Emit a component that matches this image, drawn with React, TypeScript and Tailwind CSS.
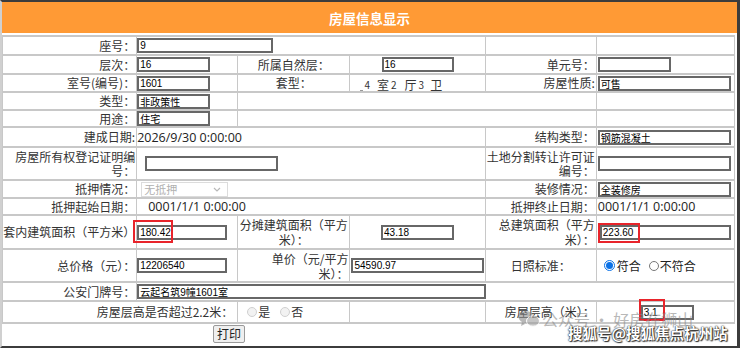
import React from 'react';

const cjk = "font-['Noto_Sans_CJK_SC',sans-serif]";
const td = 'border-x border-y-2 border-[#c8c8c8] p-0 align-middle text-[12px] leading-[14px]';
const lbl = `${td} text-right pr-[1px] text-[#333] whitespace-nowrap`;
const mid = `${td} text-center text-[#333] whitespace-nowrap`;
const date = "block font-['Open_Sans','Noto_Sans_CJK_SC',sans-serif] text-[12.5px] leading-[15px] text-[#222] whitespace-nowrap";

/* 只读输入框 */
const Box: React.FC<{ value?: string; className?: string }> = ({ value = '', className = '' }) => (
  <input
    readOnly
    value={value}
    className={`block h-[15px] border-2 border-[#676767] bg-white px-[1px] py-0 text-[10px] leading-[11px] text-black outline-none font-['Liberation_Sans','Noto_Sans_CJK_SC',sans-serif] ${className}`}
  />
);

const Radio: React.FC<{ checked?: boolean; disabled?: boolean }> = ({ checked, disabled }) =>
  checked ? (
    <span className="inline-flex h-[11px] w-[11px] items-center justify-center rounded-full border border-[#0b72e7] bg-white">
      <span className="h-[7px] w-[7px] rounded-full bg-[#0b72e7]" />
    </span>
  ) : (
    <span
      className={`inline-block h-[10px] w-[10px] rounded-full border ${disabled ? 'border-[#d0d0d0] bg-[#f2f2f2]' : 'border-[#777] bg-white'}`}
    />
  );

const Red: React.FC<{ className: string }> = ({ className }) => (
  <span className={`pointer-events-none absolute border-2 border-[#e8242b] ${className}`} />
);

export default function App() {
  return (
    <div className={`relative h-[348px] w-[740px] overflow-hidden border-t-2 border-b-2 border-l-2 border-r-[3px] border-t-[#3c3c3c] border-b-[#3c3c3c] border-r-[#3c3c3c] border-l-[#d0d0d0] bg-white text-[12px] leading-[14px] ${cjk}`}>
      {/* 标题栏 */}
      <div className="flex h-[31px] items-center justify-center bg-[#ff9a35] text-[13.5px] font-bold text-white">
        房屋信息显示
      </div>

      <table className="mt-[2px] w-[733px] table-fixed border-collapse border border-[#c8c8c8]">
        <colgroup>
          <col className="w-[134px]" />
          <col className="w-[101px]" />
          <col className="w-[112px]" />
          <col className="w-[135px]" />
          <col className="w-[111px]" />
          <col className="w-[138px]" />
        </colgroup>
        <tbody>
          <tr className="h-[19px]">
            <td className={lbl}>座号：</td>
            <td className={td} colSpan={3}><Box value="9" className="w-[136px]" /></td>
            <td className={td} />
            <td className={td} />
          </tr>
          <tr className="h-[19px]">
            <td className={lbl}>层次：</td>
            <td className={td}><Box value="16" className="w-[73px]" /></td>
            <td className={mid}>所属自然层：</td>
            <td className={td}><Box value="16" className="mx-auto w-[72px]" /></td>
            <td className={lbl}>单元号：</td>
            <td className={td}><Box className="ml-[1px] w-[73px]" /></td>
          </tr>
          <tr className="h-[18px]">
            <td className={lbl}>室号(编号)：</td>
            <td className={td}><Box value="1601" className="w-[73px]" /></td>
            <td className={mid}>套型：</td>
            <td className={`${td} align-bottom pl-[10px] text-[#333]`}>
              <span className="inline-flex items-end whitespace-nowrap leading-[13px] translate-y-[2px]">
                <span className="mr-[1px] inline-block w-[3px] border-b border-[#999]" />
                <span className="mr-[7px] text-[10px]">4</span>
                <span className="mr-[2px]">室</span>
                <span className="mr-[8px] text-[10px]">2</span>
                <span className="mr-[2px]">厅</span>
                <span className="mr-[6px] text-[10px]">3</span>
                <span>卫</span>
              </span>
            </td>
            <td className={lbl}>房屋性质:</td>
            <td className={td}><Box value="可售" className="ml-[1px] w-[133px]" /></td>
          </tr>
          <tr className="h-[18px]">
            <td className={lbl}>类型：</td>
            <td className={td}><Box value="非政策性" className="w-[73px]" /></td>
            <td className={td} colSpan={3} />
            <td className={td} />
          </tr>
          <tr className="h-[17px]">
            <td className={lbl}>用途：</td>
            <td className={td}><Box value="住宅" className="w-[73px]" /></td>
            <td className={td} colSpan={3} />
            <td className={td} />
          </tr>
          <tr className="h-[20px]">
            <td className={lbl}>建成日期:</td>
            <td className={td} colSpan={3}><span className={date}>2026/9/30 0:00:00</span></td>
            <td className={lbl}>结构类型：</td>
            <td className={td}><Box value="钢筋混凝土" className="ml-[1px] w-[133px]" /></td>
          </tr>
          <tr className="h-[33px]">
            <td className={lbl}>房屋所有权登记证明编<br />号：</td>
            <td className={td} colSpan={3}><Box className="ml-[8px] w-[133px]" /></td>
            <td className={lbl}>土地分割转让许可证<br />编号：</td>
            <td className={td}><Box className="ml-[1px] w-[133px]" /></td>
          </tr>
          <tr className="h-[18px]">
            <td className={lbl}>抵押情况：</td>
            <td className={td} colSpan={3}>
              <div className="ml-[4px] flex h-[15px] w-[87px] items-center justify-between border border-[#dcdcdc] bg-white px-[2px] text-[11px] leading-[13px] text-[#b0b0b0]">
                <span>无抵押</span>
                <svg width="8" height="5" viewBox="0 0 8 5" className="mr-[4px]">
                  <path d="M1 1l3 3 3-3" fill="none" stroke="#b8b8b8" strokeWidth="1.2" />
                </svg>
              </div>
            </td>
            <td className={lbl}>装修情况：</td>
            <td className={td}><Box value="全装修房" className="ml-[1px] w-[133px]" /></td>
          </tr>
          <tr className="h-[17px]">
            <td className={lbl}>抵押起始日期：</td>
            <td className={`${td} pl-[11px]`} colSpan={3}><span className={date}>0001/1/1 0:00:00</span></td>
            <td className={lbl}>抵押终止日期：</td>
            <td className={`${td} pl-[1px]`}><span className={date}>0001/1/1 0:00:00</span></td>
          </tr>
          <tr className="h-[34px]">
            <td className={`${lbl} overflow-visible`}>
              <div className="flex justify-end">套内建筑面积（平方米）</div>
            </td>
            <td className={td}>
              <span className="relative block w-[90px]">
                <Box value="180.42" className="w-[90px]" />
                <Red className="-left-[4px] -top-[5px] h-[23px] w-[40px]" />
              </span>
            </td>
            <td className={`${mid} leading-[15px]`}>分摊建筑面积（平方<br />米）：</td>
            <td className={td}><Box value="43.18" className="mx-auto w-[73px]" /></td>
            <td className={`${lbl} leading-[15px]`}>总建筑面积（平方<br />米）：</td>
            <td className={td}>
              <span className="relative ml-[3px] block w-[131px]">
                <Box value="223.60" className="w-[131px]" />
                <Red className="-left-[2px] -top-[2px] h-[20px] w-[42px]" />
              </span>
            </td>
          </tr>
          <tr className="h-[33px]">
            <td className={lbl}>总价格（元）：</td>
            <td className={td}><Box value="12206540" className="w-[90px]" /></td>
            <td className={`${lbl} leading-[15px]`}>单价（元/平方<br />米）：</td>
            <td className={td}><Box value="54590.97" className="ml-[1px] w-[133px]" /></td>
            <td className={mid}>日照标准：</td>
            <td className={`${td} pl-[7px]`}>
              <div className="flex items-center text-[#222]">
                <Radio checked />
                <span className="ml-[2px] mr-[8px]">符合</span>
                <Radio />
                <span className="ml-[1px]">不符合</span>
              </div>
            </td>
          </tr>
          <tr className="h-[19px]">
            <td className={lbl}>公安门牌号：</td>
            <td className={td} colSpan={5}><Box value="云起名筑9幢1601室" className="w-[349px]" /></td>
          </tr>
          <tr className="h-[22px]">
            <td className={`${lbl} pr-[4px]`} colSpan={2}>房屋层高是否超过2.2米：</td>
            <td className={`${td} pl-[9px]`}>
              <div className="flex items-center text-[#333]">
                <Radio disabled />
                <span className="ml-[1px] mr-[10px]">是</span>
                <Radio disabled />
                <span className="ml-[1px]">否</span>
              </div>
            </td>
            <td className={td} />
            <td className={lbl}>房屋层高（米）：</td>
            <td className={td}>
              <span className="relative ml-[44px] block w-[53px]">
                <Box value="3.1" className="w-[53px]" />
                <Red className="-left-[2px] -top-[6px] h-[22px] w-[26px]" />
              </span>
            </td>
          </tr>
        </tbody>
      </table>

      <div className="flex h-[20px] items-center pl-[211px]">
        <button className="h-[18px] rounded-[2px] border border-[#9a9a9a] bg-[#efefef] px-[3px] text-[12px] leading-none text-[#222]">
          打印
        </button>
      </div>

      {/* 水印 */}
      <div className="pointer-events-none absolute left-[516px] top-[307px] flex items-center text-[16px] leading-[20px] text-[#8a8a8a] opacity-60">
        <svg width="22" height="18" viewBox="0 0 22 18" className="mr-[2px]">
          <ellipse cx="8" cy="7" rx="7.5" ry="6" fill="#8a8a8a" />
          <ellipse cx="15" cy="11" rx="6.5" ry="5.2" fill="#a0a0a0" stroke="#fff" strokeWidth="1" />
          <path d="M4 12l-1 4 4-2z" fill="#8a8a8a" />
        </svg>
        <span className="whitespace-nowrap">公众号 · 好房在狮山</span>
      </div>
      <div className="pointer-events-none absolute left-[566px] top-[322px] whitespace-nowrap text-[14.5px] leading-[18px] font-bold text-white [text-shadow:0_0_2px_#222,0_0_1px_#222,1px_1px_1px_#333]">
        搜狐号@搜狐焦点杭州站
      </div>
    </div>
  );
}
